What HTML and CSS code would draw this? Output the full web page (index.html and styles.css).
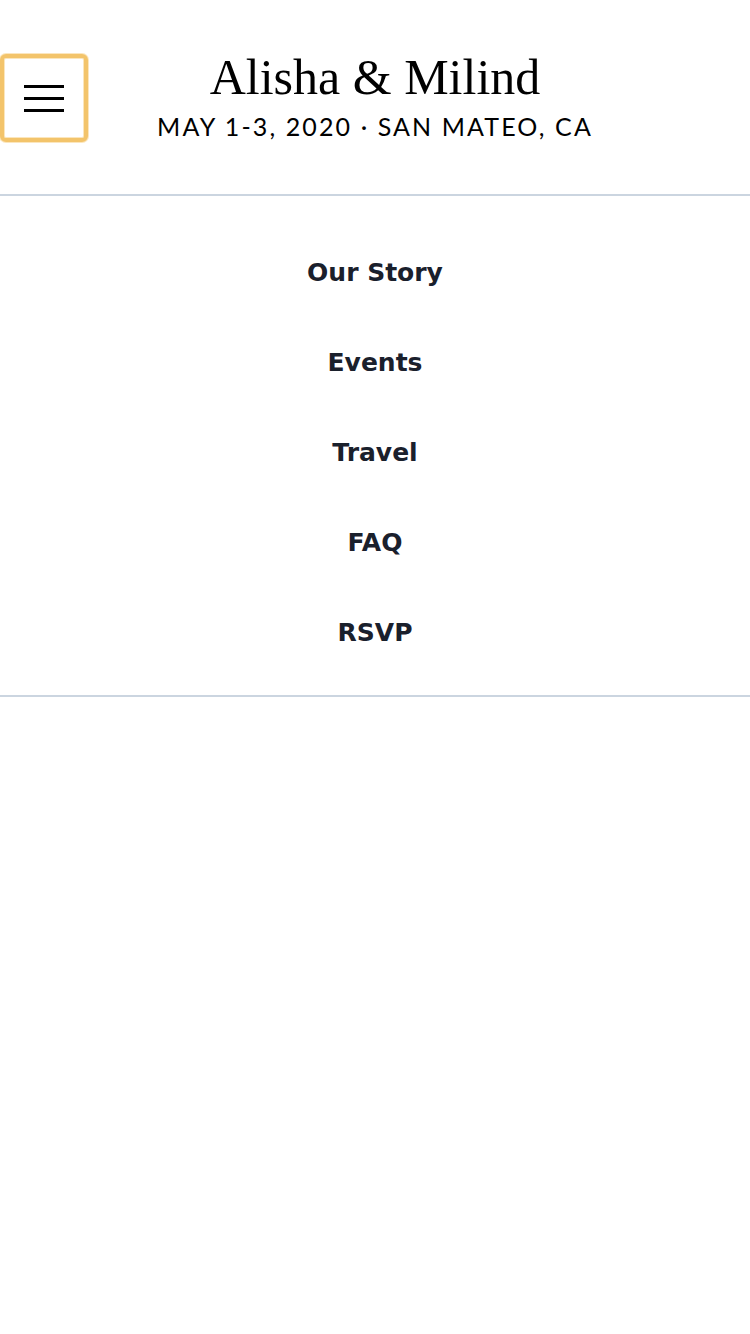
FILE: index.html
```html
<!DOCTYPE html>
<html lang="en">
<head>
<meta charset="utf-8">
<title>Alisha &amp; Milind</title>
<link rel="stylesheet" href="styles.css">
</head>
<body>
<header class="header">
  <button class="menu-btn" aria-label="Menu">
    <svg width="40" height="28" viewBox="0 0 40 28" aria-hidden="true">
      <rect x="0" y="1" width="40" height="3" fill="#000"/>
      <rect x="0" y="13" width="40" height="3" fill="#000"/>
      <rect x="0" y="25" width="40" height="3" fill="#000"/>
    </svg>
  </button>
  <div class="brand">
    <h1 class="title">Alisha &amp; Milind</h1>
    <p class="subtitle">MAY 1-3, 2020 · SAN MATEO, CA</p>
  </div>
  <div class="spacer"></div>
</header>
<nav class="nav">
  <a class="nav-link" href="#">Our Story</a>
  <a class="nav-link" href="#">Events</a>
  <a class="nav-link" href="#">Travel</a>
  <a class="nav-link" href="#">FAQ</a>
  <a class="nav-link" href="#">RSVP</a>
</nav>
</body>
</html>
```
FILE: styles.css
```css
* { box-sizing: border-box; }
html, body { margin: 0; padding: 0; background: #fff; }
body { font-family: "Liberation Serif", serif; }

.header {
  display: grid;
  grid-template-columns: 88px 1fr 88px;
  align-items: start;
  height: 196px;
  border-bottom: 2px solid #cbd5e0;
}

.menu-btn {
  margin-top: 54px;
  width: 88px;
  height: 88px;
  padding: 0;
  background: #fff;
  border: 4px solid #f3c46b;
  border-radius: 6px;
  box-shadow: 0 0 0 1px rgba(246, 200, 110, 0.45), inset 0 0 0 1px #fbe6bd;
  display: flex;
  align-items: center;
  justify-content: center;
}
.menu-btn svg { display: block; }

.brand {
  text-align: center;
  padding-top: 46px;
}
.title {
  margin: 0;
  font-family: "Liberation Serif", "DejaVu Serif", serif;
  font-weight: 400;
  font-size: 50px;
  line-height: 62px;
  color: #000;
}
.subtitle {
  margin: 3px 0 0;
  font-family: "Lato", "Noto Sans", sans-serif;
  font-size: 25px;
  line-height: 30px;
  letter-spacing: 2.1px;
  color: #000;
}

.nav {
  display: flex;
  flex-direction: column;
  align-items: center;
  padding: 32px 0 17px;
  border-bottom: 2px solid #cbd5e0;
}
.nav-link {
  display: block;
  height: 90px;
  line-height: 90px;
  font-family: "DejaVu Sans", "Noto Sans", sans-serif;
  font-weight: 700;
  font-size: 25px;
  color: #1a202c;
  text-decoration: none;
}
```
